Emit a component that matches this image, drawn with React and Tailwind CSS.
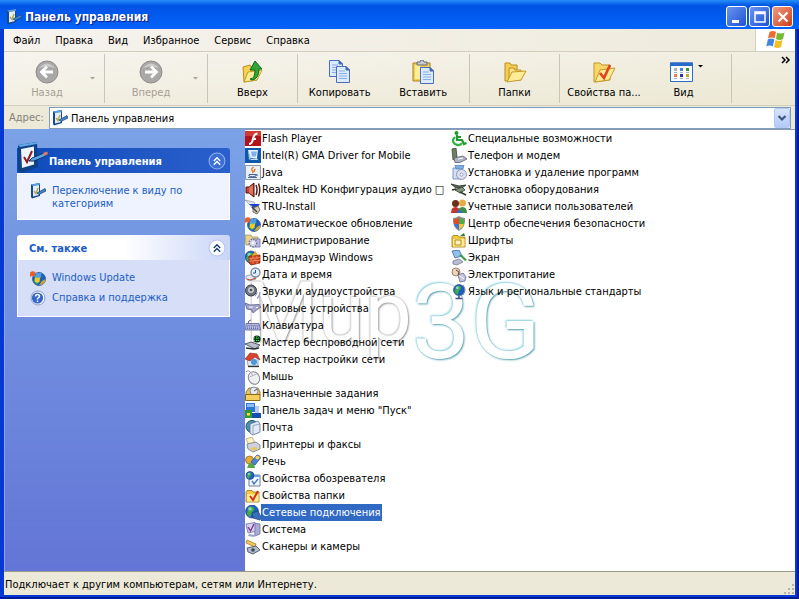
import React from "react";

const Svg = ({ children, className = "size-4", box = 16 }) => (
  <svg aria-hidden="true" viewBox={`0 0 ${box} ${box}`} className={`${className} shrink-0`}>
    {children}
  </svg>
);

const PanelArt = () => (
  <>
    <path d="M1 1.500L10 0v13l-8 2.500-1-1.500z" fill="#174a8c" />
    <path d="M1 1.500L10 0v1.500L3 3z" fill="#5fa0e0" />
    <path d="M3 3l6-1v10l-6 1.500z" fill="#e3eefc" />
    <path d="M4 8l2 2.500L8 5" stroke="#b9a548" strokeWidth="1.400" fill="none" />
    <path d="M7 10l8-4.500 1 2.500-7 3.500z" fill="#3f86c9" stroke="#1c3f70" strokeWidth=".7" />
  </>
);

const GlobeArt = ({ cx = 8, cy = 8, r = 7 }) => (
  <>
    <circle cx={cx} cy={cy} r={r} fill="#1f5fc4" stroke="#143a80" strokeWidth=".6" />
    <path
      d={`M${cx - r * 0.6} ${cy - r * 0.6}q${r * 0.7} ${-r * 0.4} ${r} ${r * 0.2}l${-r * 0.4} ${r * 0.6}-${r * 0.3} ${r * 0.7}-${r * 0.5}-${r * 0.5}z`}
      fill="#3fae49"
    />
    <circle cx={cx - r * 0.3} cy={cy - r * 0.4} r={r * 0.25} fill="#bfe3ff" opacity=".7" />
  </>
);

const FolderArt = () => (
  <>
    <path d="M1 4V14h13V4H8L7 2.500H2z" fill="#f3c93f" stroke="#9a7414" strokeWidth=".8" />
    <path d="M2 6h11.500v7.500H2z" fill="#fdeb93" />
  </>
);

const UpdateArt = () => (
  <>
    <GlobeArt cx={9} cy={9} r={6.5} />
    <path d="M0 2.500q3-2.500 5.500 0L4.500 7q-2-2-4.500 0z" fill="#e8602a" />
    <path d="M6 2.500q3 1.500 6-.5l-1.500 5Q8 8.500 5 7z" fill="#4f9fe8" />
    <path d="M5 7.500q3 1.500 5-.5l-.5 5q-2.500 1.500-4.500-.5z" fill="#f3cb27" />
    <path d="M9 15q6 0 6.500-6L12 11z" fill="#c9a928" />
  </>
);

const art = {
  panel: <PanelArt />,
  flash: (
    <>
      <path d="M0 0h16v15H0z" fill="#b3141b" />
      <path d="M0 0h16v5H0z" fill="#cf3a35" />
      <path d="M4 13q3 0 4-5 1-5 4.500-5.500M7 8h4" stroke="#fff" strokeWidth="2" fill="none" />
    </>
  ),
  intel: (
    <>
      <path d="M0 0h16v15H0z" fill="#0d58ab" />
      <path d="M3 2h10l-1 8H5z" fill="#e6f1ff" />
      <path d="M6 3.500h6l-1 5H7z" fill="#7fb0ea" />
      <path d="M3 2l3 8-2 2z" fill="#9cc5f2" />
      <path d="M5 11l7-1 1 2H6z" fill="#c2dbf8" />
    </>
  ),
  java: (
    <>
      <path d="M.5.5h15v14H.5z" fill="#e9eef3" stroke="#8b98a6" />
      <path d="M8.500 2q-3 2-1 4 1 1 0 2M10.500 4q-2 1-1 3" stroke="#e2711d" fill="none" strokeWidth="1.300" />
      <path d="M4 9.500h7v1.500q-3.500 1.500-7 0zM3 12.500h9M11 9.500q2 0 1 1.500" stroke="#47689a" fill="none" />
    </>
  ),
  realtek: (
    <>
      <path d="M1 5h3l5-4v14l-5-4H1z" fill="#c9422e" stroke="#3d120c" />
      <path d="M5 4.500v7M7 3.500v9" stroke="#ef9479" strokeWidth="1.200" />
      <path d="M11 3q2 5 0 10M13.500 1.500q2.500 6.500 0 13" stroke="#4c211b" fill="none" strokeWidth="1.500" />
    </>
  ),
  tru: (
    <>
      <path d="M0 1l9 2 2 5-4 1-3-4z" fill="#dfe4ec" stroke="#7b8595" strokeWidth=".6" />
      <path d="M4 5h11l-3 3.500-4-.5z" fill="#1a3fd1" />
      <path d="M8 9l5-2 2 4-3 4-4-2z" fill="#d9cdb0" stroke="#6a604c" strokeWidth=".9" />
      <path d="M7 8l5 5" stroke="#32415f" strokeWidth="1.500" />
    </>
  ),
  update: <UpdateArt />,
  admin: (
    <>
      <path d="M0 2h6l1 2h6v8H1z" fill="#e7d489" stroke="#988655" strokeWidth=".7" />
      <path d="M7 6h8v8H7z" fill="#b9bbe0" stroke="#6e70a5" strokeWidth=".8" />
      <circle cx="8" cy="10" r="3.800" fill="#d8d7ee" stroke="#7775a6" strokeDasharray="1.500 1" strokeWidth="1.500" />
      <circle cx="8" cy="10" r="1.300" fill="#fff" />
    </>
  ),
  firewall: (
    <>
      <GlobeArt cx={6} cy={7} r={6} />
      <path d="M4 6l11-1v8l-9 2-2-2z" fill="#cf401a" stroke="#6e1e09" strokeWidth=".7" />
      <path d="M4 8.600l11-1M4 11.200l11-1M8 6v2.600M12 6v2.600M6 8.600v2.600M10 8.600v2.600M8 11.200V14M12 11.200V14" stroke="#f6a57e" strokeWidth=".7" />
      <path d="M7 6q1-3 4-5 0 2 2 4z" fill="#f9a31d" />
    </>
  ),
  date: (
    <>
      <path d="M1 9l7-2 3 5-7 2-3-2z" fill="#e8eaf0" stroke="#8990a0" strokeWidth=".8" />
      <path d="M2 12l3 1 6-2" stroke="#c34934" fill="none" />
      <circle cx="10.500" cy="5.500" r="4.500" fill="#e1eefb" stroke="#7f8ca0" strokeWidth="1.400" />
      <path d="M10.500 3v3H8" stroke="#34507c" fill="none" />
    </>
  ),
  sound: (
    <>
      <circle cx="6" cy="6.500" r="5.500" fill="#6f747e" stroke="#3a3d45" />
      <circle cx="6" cy="6" r="3" fill="#c6cad2" />
      <circle cx="6" cy="6" r="1.300" fill="#4d515a" />
      <path d="M10 12q2-2 2-4M12 14.500q3-2.500 3-6.500" stroke="#8f97c0" fill="none" strokeWidth="1.200" />
    </>
  ),
  game: (
    <>
      <path d="M0 2l5 2 9-.5q2 1 1.500 3L12 8.500l-3 3-2-.5v-2L2 8z" fill="#a4a6cc" stroke="#585a87" strokeWidth=".8" />
      <path d="M4 6h4M11 6.500h2" stroke="#fff" />
    </>
  ),
  keyboard: (
    <>
      <path d="M3 6q0-4 3-4" stroke="#585a87" fill="none" />
      <path d="M1 5.500h13l1.500 6.500H.5z" fill="#b4b8de" stroke="#5c6091" strokeWidth=".8" />
      <path d="M2.500 7.500h11M2 9h12M2 10.500h12" stroke="#6a6ea5" strokeDasharray="1 1" />
    </>
  ),
  wireless: (
    <>
      <path d="M0 9l6-2 9 3-5 4z" fill="#b9bcc9" stroke="#3d4251" strokeWidth=".8" />
      <path d="M1 13l8 1 5-1" stroke="#2a2d38" fill="none" strokeWidth="1.300" />
      <circle cx="12" cy="4" r="3.500" fill="#0b3315" />
      <path d="M9 3h6M9 5.500h6M12 1v7" stroke="#46d556" strokeDasharray="1 1" />
    </>
  ),
  home: (
    <>
      <path d="M2 6l6-4 5 5v7H3z" fill="#dce9fa" stroke="#7c8caa" strokeWidth=".7" />
      <path d="M0 7l5-6 7 1 3 6-5-3-5 4z" fill="#d9442a" stroke="#8d2716" strokeWidth=".6" />
      <circle cx="9" cy="10" r="3" fill="#4a97dd" />
      <path d="M3 14.500h11" stroke="#333" strokeWidth="1.300" />
    </>
  ),
  mouse: (
    <>
      <path d="M1 3q2-3 5 1" stroke="#8a8f98" fill="none" />
      <ellipse cx="9" cy="9" rx="5.500" ry="6.500" transform="rotate(-25 9 9)" fill="#eeeff1" stroke="#83888f" />
      <path d="M4.500 8l7-3M7.500 6.500L6.500 4" stroke="#9ba0a7" strokeWidth=".8" />
    </>
  ),
  tasks: (
    <>
      <path d="M1 6l3-4h9l2 4v3H1z" fill="#e6c65a" stroke="#7e6420" strokeWidth=".8" />
      <circle cx="9" cy="5" r="4" fill="#e4e8f0" stroke="#8b8e96" />
      <path d="M9 5l3-2" stroke="#444" fill="none" strokeWidth=".9" />
      <path d="M.5 8.500h14.500v6H.5z" fill="#f3d05c" stroke="#8a6a18" />
    </>
  ),
  taskbar: (
    <>
      <path d="M1 0h9v9H1z" fill="#2f75d8" />
      <path d="M2 1h7v3H2z" fill="#8cbdf5" />
      <path d="M10 3h4v8h-4z" fill="#b6cdef" />
      <path d="M0 7h7v8H0z" fill="#2c9a36" />
      <path d="M7 10h9v5H7z" fill="#164fb2" />
      <path d="M2 10h3v2.500H2z" fill="#ffdc3b" />
    </>
  ),
  mail: (
    <>
      <circle cx="7" cy="6.500" r="6" fill="#4d94a6" stroke="#1c5263" />
      <path d="M5 4l8-3 2 3v8l-7 3-3-2z" fill="#dfeaf8" stroke="#536e91" strokeWidth=".8" />
      <path d="M8 5.500v9M8 5.500l7-1.500" stroke="#7d96b6" fill="none" strokeWidth=".8" />
    </>
  ),
  printer: (
    <>
      <path d="M1 2l6-2 3 6-6 2z" fill="#fff2bb" stroke="#a39b6f" strokeWidth=".7" />
      <path d="M2 7l9-2 4 3v4l-7 3-5-3z" fill="#cfd2de" stroke="#717685" strokeWidth=".8" />
      <path d="M5 11l6-1 2 2-5 2z" fill="#e8c75c" />
    </>
  ),
  speech: (
    <>
      <circle cx="4.500" cy="6" r="4" fill="#e3ad38" stroke="#926415" strokeWidth=".8" />
      <path d="M2 14l2-5 5 1 1 4z" fill="#58a64c" />
      <path d="M6 8l6-7q3 0 3.500 3L10 11z" fill="#4b83d3" stroke="#284f92" strokeWidth=".8" />
      <circle cx="12.500" cy="3.500" r="2" fill="#f4d155" />
    </>
  ),
  inet: (
    <>
      <path d="M4 4h11v11H4z" fill="#f5f9ff" stroke="#6a7fa8" />
      <path d="M4 4h11v2H4z" fill="#6fa3e4" />
      <GlobeArt cx={5} cy={4.5} r={4} />
      <path d="M7 10l2 3 4-5" stroke="#3f77c9" strokeWidth="1.400" fill="none" />
    </>
  ),
  folderOpt: (
    <>
      <FolderArt />
      <path d="M5 8l3 4 5-9" stroke="#d4301a" strokeWidth="2" fill="none" />
    </>
  ),
  network: (
    <>
      <GlobeArt cx={7} cy={6.500} r={6.5} />
      <path d="M7 8l6-2 3 6-1 3-7-2z" fill="#3a6fbe" stroke="#21447d" strokeWidth=".8" />
    </>
  ),
  system: (
    <>
      <path d="M9 1l6 1v10l-5 2z" fill="#a9add6" stroke="#6d70a0" strokeWidth=".8" />
      <path d="M1 2l9-1.500v9L3 11z" fill="#cfd2ea" stroke="#6d70a0" strokeWidth=".8" />
      <path d="M3 5l2.500 4L9 2" stroke="#7f2a96" strokeWidth="1.300" fill="none" />
      <path d="M4 12l7 1-2 2-6-1z" fill="#9aa3cf" />
    </>
  ),
  scanner: (
    <>
      <path d="M2 1l9 4-1 3-9-4z" fill="#f2c85a" stroke="#97731c" strokeWidth=".7" />
      <path d="M2 9l9-2 4 4-7 4-5-2z" fill="#b4bac8" stroke="#4e5669" strokeWidth=".9" />
      <circle cx="8" cy="11" r="1.800" fill="#34486d" />
    </>
  ),
  access: (
    <>
      <circle cx="5.500" cy="2" r="2" fill="#1f9a30" />
      <path d="M6 4v5h5l2 4 2.500-1M6 6h4" stroke="#1f9a30" strokeWidth="2.200" fill="none" />
      <path d="M4 6q-4 4 0 7 5 2.500 7-1" stroke="#2db340" strokeWidth="2.200" fill="none" />
    </>
  ),
  phone: (
    <>
      <path d="M1 1l4-1 1 9-4 3z" fill="#6f8069" stroke="#3a4637" strokeWidth=".8" />
      <path d="M3 10l9-2 4 3-7 3.500H4z" fill="#aeb3c4" stroke="#5a6074" strokeWidth=".8" />
      <path d="M7 11l5-1" stroke="#fff" />
    </>
  ),
  programs: (
    <>
      <path d="M2 3h8v11H2z" fill="#cfe0f5" stroke="#6483ae" strokeWidth=".8" />
      <path d="M4 0h9l-1 4H5z" fill="#7eaee4" stroke="#446ea5" strokeWidth=".6" />
      <circle cx="10.500" cy="9.500" r="5" fill="#dcdff0" stroke="#7f86a6" strokeWidth=".8" />
      <circle cx="10.500" cy="9.500" r="1.500" fill="#fff" stroke="#7f86a6" strokeWidth=".7" />
    </>
  ),
  hardware: (
    <>
      <path d="M0 2l8 2 7-1-4 3-6 0z" fill="#5d6d5b" stroke="#2d372b" strokeWidth=".9" />
      <path d="M4 8l7-3 3 3-5 3z" fill="#84957f" stroke="#35412f" strokeWidth=".8" />
      <path d="M1 8l4-1M9 10l6 3" stroke="#2b3429" strokeWidth="1.400" />
    </>
  ),
  users: (
    <>
      <circle cx="4.500" cy="4.500" r="3.500" fill="#6d2f17" />
      <circle cx="11.500" cy="4" r="3.500" fill="#e4ad48" />
      <path d="M0 14q0-6 4.500-6T9 14z" fill="#c4362c" />
      <path d="M7 14q0-6 4.500-6t4.500 6z" fill="#3c8e49" />
      <path d="M5 14l3-4 4 4z" fill="#3868c0" />
    </>
  ),
  security: (
    <>
      <path d="M8 0q3 2 6 2 1 9-6 13Q1 11 2 2q3 0 6-2z" fill="#8a8f99" />
      <path d="M8 1.500V8h-5V3q3 0 5-1.500z" fill="#e5482b" />
      <path d="M8 1.500V8h5V3q-3 0-5-1.500z" fill="#4cae46" />
      <path d="M3 8h5v6Q4 11.500 3 8z" fill="#3b73d8" />
      <path d="M13 8H8v6q4-2.500 5-6z" fill="#f6c62d" />
    </>
  ),
  fonts: (
    <>
      <FolderArt />
      <path d="M4 7h6v5H4z" fill="#fff4bd" stroke="#b58b1d" />
      <path d="M9 3l4-3 1 3z" fill="#2f7d38" />
    </>
  ),
  display: (
    <>
      <path d="M1 1l7-1 3 6-7 2z" fill="#8fc0f0" stroke="#4e7399" strokeWidth=".9" />
      <path d="M8 5l3 0 5 5-2 1z" fill="#3d9b48" />
      <path d="M2 11l6-2 4 3-6 3-4-1z" fill="#b7bed5" stroke="#69718c" strokeWidth=".7" />
    </>
  ),
  power: (
    <>
      <circle cx="5" cy="5" r="4" fill="#ead4b8" stroke="#8b705a" strokeWidth=".8" />
      <path d="M5 3l3 2-1 3" stroke="#7c3b2c" fill="none" />
      <path d="M7 8l5-2 3 4-1 4-5 1z" fill="#c2c4de" stroke="#676a93" strokeWidth=".8" />
      <path d="M9 9l4 3" stroke="#fff" />
    </>
  ),
  language: (
    <>
      <GlobeArt cx={8} cy={6} r={5.500} />
      <path d="M8 12v2M4.500 14.500h7" stroke="#46508e" strokeWidth="1.600" />
      <path d="M12 1q4 5 0 10" stroke="#7582bb" fill="none" />
    </>
  ),
  help: (
    <>
      <circle cx="8" cy="8" r="7" fill="#f4f7ff" stroke="#8f9dbd" />
      <circle cx="7.500" cy="8" r="5.600" fill="#3567c8" />
      <path d="M5.500 6.500q0-2 2-2t2 1.800q0 1.200-2 2.200v1M7.500 10.500v1.500" stroke="#fff" strokeWidth="1.500" fill="none" />
    </>
  ),
};

const firstColumn = [
  ["flash", "Flash Player"],
  ["intel", "Intel(R) GMA Driver for Mobile"],
  ["java", "Java"],
  ["realtek", "Realtek HD Конфигурация аудио □"],
  ["tru", "TRU-Install"],
  ["update", "Автоматическое обновление"],
  ["admin", "Администрирование"],
  ["firewall", "Брандмауэр Windows"],
  ["date", "Дата и время"],
  ["sound", "Звуки и аудиоустройства"],
  ["game", "Игровые устройства"],
  ["keyboard", "Клавиатура"],
  ["wireless", "Мастер беспроводной сети"],
  ["home", "Мастер настройки сети"],
  ["mouse", "Мышь"],
  ["tasks", "Назначенные задания"],
  ["taskbar", "Панель задач и меню \"Пуск\""],
  ["mail", "Почта"],
  ["printer", "Принтеры и факсы"],
  ["speech", "Речь"],
  ["inet", "Свойства обозревателя"],
  ["folderOpt", "Свойства папки"],
  ["network", "Сетевые подключения"],
  ["system", "Система"],
  ["scanner", "Сканеры и камеры"],
];

const secondColumn = [
  ["access", "Специальные возможности"],
  ["phone", "Телефон и модем"],
  ["programs", "Установка и удаление программ"],
  ["hardware", "Установка оборудования"],
  ["users", "Учетные записи пользователей"],
  ["security", "Центр обеспечения безопасности"],
  ["fonts", "Шрифты"],
  ["display", "Экран"],
  ["power", "Электропитание"],
  ["language", "Язык и региональные стандарты"],
];

const ItemList = ({ items, selected }) => (
  <ul className="w-[206px] shrink-0">
    {items.map(([icon, label]) => (
      <li key={label} className="h-[17px]">
        <button type="button" className="flex h-[17px] items-center whitespace-nowrap">
          <Svg>{art[icon]}</Svg>
          <span className={label === selected ? "h-[17px] bg-[#316ac5] px-px leading-[18px] text-white" : "h-[17px] px-px leading-[18px]"}>
            {label}
          </span>
        </button>
      </li>
    ))}
  </ul>
);

const CircleArrow = ({ flip }) => (
  <Svg className="size-6" box={24}>
    <circle cx="12" cy="12" r="11" fill="#a9a8a6" stroke="#8f8e8c" />
    <path d="M4 8q8-9 16 0-8-3-16 0z" fill="#cbcac8" />
    <path d={flip ? "M6 12h11M12 6.500l5.500 5.500-5.500 5.500" : "M18 12H7M12 6.500L6.500 12l5.500 5.500"} stroke="#fff" strokeWidth="2.800" fill="none" />
  </Svg>
);

const Page = ({ x, y }) => (
  <g transform={`translate(${x} ${y})`}>
    <path d="M.5.500h9.500l3.500 3.500v12.500H.5z" fill="#dceafd" stroke="#4a6ebb" />
    <path d="M10 .5V4h3.500z" fill="#4068b5" stroke="#4068b5" />
    <path d="M3 5h6M3 7.500h8M3 10h8M3 12.500h8" stroke="#86aee9" />
  </g>
);

const toolArt = {
  up: (
    <>
      <path d="M2 7l7-2 1 2h7l-1 13-13 2z" fill="#f6cf53" stroke="#b98e22" />
      <path d="M3 22l4-10 14-2-5 10z" fill="#fdeb96" stroke="#c59b2b" />
      <path d="M9 19q5 0 5-9h-5l5-9 7 8h-3q0 10-7 11z" fill="#2fa53a" stroke="#116a1d" />
    </>
  ),
  copy: (
    <>
      <Page x={1} y={0} />
      <Page x={8} y={6} />
    </>
  ),
  paste: (
    <>
      <path d="M2 3h17v18H2z" fill="#f3cf50" stroke="#a98124" />
      <path d="M4 5h5v14H4z" fill="#fdee9f" />
      <path d="M6 5V2h3l1-2h2l1 2h3v3z" fill="#c9cbd2" stroke="#666b77" />
      <Page x={9} y={7} />
    </>
  ),
  folders: (
    <>
      <path d="M2 3h5l1 2h6v15l-12 1z" fill="#f6cf53" stroke="#b98e22" />
      <path d="M6 8h5l1 2h6v10H6z" fill="#fbe084" stroke="#b98e22" />
      <path d="M4 22l5-10 14-1-5 9z" fill="#fdeb96" stroke="#c59b2b" />
    </>
  ),
  options: (
    <>
      <path d="M2 3h6l2 2h8v15l-16 2z" fill="#f8d66a" stroke="#bf9528" />
      <path d="M3 22l5-12 15-2-6 12z" fill="#fdeb96" stroke="#c59b2b" />
      <path d="M8 13l4 5 6-13" stroke="#e2421e" strokeWidth="2.600" fill="none" />
    </>
  ),
  view: (
    <>
      <path d="M.5 3h22v18.500H.5z" fill="#fff" stroke="#2a6bc9" />
      <path d="M0 2.500h23V6H0z" fill="#2a6bc9" />
      <path d="M4 8h3v3H4z" fill="#b0b0b0" />
      <path d="M10 8h3v3h-3z" fill="#3f83e8" />
      <path d="M16 8h3v3h-3z" fill="#35913a" />
      <path d="M4 14h3v3H4z" fill="#ee7a57" />
      <path d="M10 14h3v3h-3z" fill="#24389e" />
      <path d="M16 14h3v3h-3z" fill="#c9a228" />
      <path d="M4 12.500h3M10 12.500h3M16 12.500h3M4 18.500h3M10 18.500h3M16 18.500h3" stroke="#9db4d8" />
    </>
  ),
};

const Caret = ({ className }) => (
  <Svg className={className} box={5}>
    <path d="M0 1h5L2.500 3.500z" fill="currentColor" />
  </Svg>
);

const ToolButton = ({ icon, label, children, className = "" }) => (
  <button type="button" className={`flex min-w-0 flex-1 flex-col items-center gap-px whitespace-nowrap pt-1.5 ${className}`}>
    {children || (
      <Svg className="size-6" box={24}>
        {toolArt[icon]}
      </Svg>
    )}
    <span className="leading-4">{label}</span>
  </button>
);

const Chevrons = () => (
  <path d="M5.500 8.500L8.500 5.500l3 3M5.500 12L8.500 9l3 3" stroke="currentColor" strokeWidth="1.400" fill="none" />
);

const SideLink = ({ icon, children }) => (
  <a href="#" className="flex gap-1.5 text-[#215dc6]">
    <Svg>{art[icon]}</Svg>
    <span className="pt-px leading-[13px]">{children}</span>
  </a>
);

const captionButton = "flex size-[21px] items-center justify-center rounded-[3px] border border-white text-white";

export default function App() {
  return (
    <div className="flex min-h-screen flex-col border-r-2 border-b-2 border-[#001a9c] font-['DejaVu_Sans_Condensed','DejaVu_Sans',sans-serif] text-[11px] text-black">
      <div className="flex flex-1 flex-col border-r-2 border-b-2 border-l-4 border-[#0639d3] bg-[#ece9d8]">
        <header className="-mr-1 -ml-1 flex h-[29px] items-center bg-linear-to-b from-[#2a8cf8] via-[#0053e4] via-20% to-[#0463fb] pt-1 pr-1.5 pl-1.5">
          <Svg>{art.panel}</Svg>
          <h1 className="ml-[3px] flex-1 text-[12px] font-bold text-white [text-shadow:1px_1px_1px_#0a1883]">Панель управления</h1>
          <div className="flex gap-0.5">
            <button type="button" aria-label="Свернуть" className={`${captionButton} bg-linear-to-br from-[#6b93f0] to-[#1f4fd4]`}>
              <Svg box={16}>
                <path d="M3 11h7v3H3z" fill="#fff" />
              </Svg>
            </button>
            <button type="button" aria-label="Развернуть" className={`${captionButton} bg-linear-to-br from-[#6b93f0] to-[#1f4fd4]`}>
              <Svg box={16}>
                <path d="M3 3h10v10H3zM3 4.500h10" stroke="#fff" strokeWidth="1.500" fill="none" />
              </Svg>
            </button>
            <button type="button" aria-label="Закрыть" className={`${captionButton} bg-linear-to-br from-[#f09a80] to-[#cc3a12]`}>
              <Svg box={16}>
                <path d="M3.500 3.500l9 9M12.500 3.500l-9 9" stroke="#fff" strokeWidth="2.200" />
              </Svg>
            </button>
          </div>
        </header>

        <nav className="flex h-[23px] items-stretch border-b border-[#d3cfbf] bg-linear-to-r from-[#f6f2ee] to-[#eeebdc]">
          <div className="flex flex-1 items-center gap-[15px] pt-0.5 pl-[9px]">
            {["Файл", "Правка", "Вид", "Избранное", "Сервис", "Справка"].map((label) => (
              <button key={label} type="button">
                {label}
              </button>
            ))}
          </div>
          <div className="flex w-10 items-center justify-center border-l border-[#d3cfbf] bg-white">
            <Svg className="size-5" box={20}>
              <path d="M3.500 2q3.500-2 6.500 0L8.500 8.500q-3-2-6.500 0z" fill="#ee6b33" />
              <path d="M11 2.500q4 2 7.500 0L17 9q-3.500 2-7 0z" fill="#76b82e" />
              <path d="M1.800 9.500q3.500-2 6.500 0l-1.500 7q-3-2-6.500 0z" fill="#3e86de" />
              <path d="M9.500 10q3.500 2 7 0l-1.500 7q-3.500 2-7 0z" fill="#f6bf27" />
            </Svg>
          </div>
        </nav>

        <div className="flex h-[54px] border-b border-[#d3cfbf] bg-linear-to-br from-[#f7f4ef] to-[#ece8d3] py-0.5">
          <div className="flex w-[101px] border-r border-[#c9c6b5] text-[#a5a294]">
            <ToolButton label="Назад" className="pl-1">
              <CircleArrow />
            </ToolButton>
            <button type="button" aria-label="Назад: список" className="w-[18px] pr-1.5">
              <Caret className="ml-1 size-[5px]" />
            </button>
          </div>
          <div className="flex w-[103px] border-r border-[#c9c6b5] text-[#a5a294]">
            <ToolButton label="Вперед" className="pl-2">
              <CircleArrow flip />
            </ToolButton>
            <button type="button" aria-label="Вперед: список" className="w-[18px] pr-1.5">
              <Caret className="ml-1 size-[5px]" />
            </button>
          </div>
          <div className="flex w-[90px] border-r border-[#c9c6b5]">
            <ToolButton icon="up" label="Вверх" />
          </div>
          <div className="flex w-[172px] border-r border-[#c9c6b5]">
            <ToolButton icon="copy" label="Копировать" />
            <ToolButton icon="paste" label="Вставить" className="pr-1" />
          </div>
          <div className="flex w-[90px] border-r border-[#c9c6b5]">
            <ToolButton icon="folders" label="Папки" />
          </div>
          <div className="flex w-[172px] border-r border-[#c9c6b5]">
            <div className="flex w-[88px]">
              <ToolButton icon="options" label="Свойства па..." />
            </div>
            <ToolButton label="Вид" className="pr-3">
              <span className="flex pl-1.5">
                <Svg className="size-6" box={24}>
                  {toolArt.view}
                </Svg>
                <Caret className="mt-1 ml-1 size-[5px]" />
              </span>
            </ToolButton>
          </div>
          <button type="button" aria-label="Другие кнопки" className="ml-auto flex pt-px pr-1">
            <Svg className="size-2.5" box={10}>
              <path d="M1 2l3 3-3 3M5 2l3 3-3 3" stroke="#000" strokeWidth="1.500" fill="none" />
            </Svg>
          </button>
        </div>

        <div className="flex h-[23px] items-stretch pt-px pr-1 pl-[5px]">
          <label htmlFor="address" className="w-10 self-center text-[#85827a]">
            Адрес:
          </label>
          <div className="flex flex-1 items-center border border-[#7f9db9] bg-white pl-0.5">
            <Svg>{art.panel}</Svg>
            <input id="address" defaultValue="Панель управления" className="min-w-0 flex-1 bg-transparent pt-0.5 pl-[3px] outline-none" />
            <button type="button" aria-label="Открыть список адресов" className="flex h-5 w-4 items-center justify-center rounded-xs border border-[#b3c9f5] bg-linear-to-b from-[#d9e4fd] to-[#b2c9f7]">
              <Svg className="size-2.5" box={10}>
                <path d="M1.500 3L5 6.500 8.500 3" stroke="#3f5684" strokeWidth="2.200" fill="none" />
              </Svg>
            </button>
          </div>
        </div>

        <div className="flex flex-1">
          <aside className="flex w-[241px] shrink-0 flex-col gap-[15px] border-l border-[#8aa6ec] bg-linear-to-b from-[#7ba2e7] to-[#6375d6] pt-[19px] pr-[15px] pl-3">
            <section>
              <h2 className="relative flex h-[25px] items-center rounded-tr-[3px] bg-linear-to-r from-[#0d4cbb] to-[#2a5fcc] pr-1 pl-8 font-bold text-white">
                <span className="absolute bottom-0 left-0">
                  <Svg className="size-8" box={32}>
                    <path d="M1 4l19-3 1 25-17 6-3-3z" fill="#0f4286" />
                    <path d="M1 4l19-3v2L3 6z" fill="#63a8ec" />
                    <path d="M4 8l13-2.500v18L5 27z" fill="#eef5ff" />
                    <path d="M7 16l3 5 5-11" stroke="#8c1d27" strokeWidth="2" fill="none" />
                    <path d="M12 20l3-3 12-5 2 3-12 5z" fill="#5aa4e6" stroke="#12366b" />
                    <path d="M26 12l4-1.500 1 2.500-3.500 2z" fill="#e37a60" />
                  </Svg>
                </span>
                <span className="flex-1 pt-1">Панель управления</span>
                <button type="button" aria-label="Свернуть раздел">
                  <Svg className="size-[18px]" box={17}>
                    <circle cx="8.500" cy="8.500" r="7.500" fill="#3c6fd6" stroke="#8fb0f0" />
                    <Chevrons />
                  </Svg>
                </button>
              </h2>
              <div className="h-[47px] border border-t-0 border-white bg-[#eff3ff] pt-2.5 pr-8 pl-3">
                <SideLink icon="panel">Переключение к виду по категориям</SideLink>
              </div>
            </section>
            <section>
              <h2 className="flex h-[25px] items-center rounded-t-[3px] bg-linear-to-r from-white from-50% to-[#c9d5f8] pr-1 pl-3 font-bold text-[#215dc6]">
                <span className="flex-1 pt-1">См. также</span>
                <button type="button" aria-label="Свернуть раздел" className="text-[#1c3f7c]">
                  <Svg className="size-[18px]" box={17}>
                    <circle cx="8.500" cy="8.500" r="7.500" fill="#fff" stroke="#b9c4e6" />
                    <Chevrons />
                  </Svg>
                </button>
              </h2>
              <div className="flex h-[57px] flex-col gap-1 border border-t-0 border-white bg-[#d6dff7] pt-2.5 pl-3">
                <SideLink icon="update">Windows Update</SideLink>
                <SideLink icon="help">Справка и поддержка</SideLink>
              </div>
            </section>
          </aside>

          <main className="relative isolate flex flex-1 border-t border-[#8a9bb8] bg-white">
            <div aria-hidden="true" className="absolute top-[128px] left-0 -z-10 flex items-start font-[Roboto,'Open_Sans',sans-serif] text-white select-none">
              <span className="text-[84px] leading-[110px] [text-shadow:1px_1px_2px_#999,-1px_-1px_2px_#ccc]">Mup</span>
              <span className="text-[104px] leading-[130px] [text-shadow:1px_1px_2px_#4f9eab,-1px_-1px_2px_#8fd3dd]">3G</span>
            </div>
            <ItemList items={firstColumn} selected="Сетевые подключения" />
            <ItemList items={secondColumn} />
          </main>
        </div>

        <footer className="flex h-6 items-center justify-between border-t border-[#9a9888]">
          <span className="pt-1 pl-px">Подключает к другим компьютерам, сетям или Интернету.</span>
          <Svg className="size-3 self-end" box={12}>
            <path d="M9 1h2v2H9zM5 5h2v2H5zM9 5h2v2H9zM1 9h2v2H1zM5 9h2v2H5zM9 9h2v2H9z" fill="#b8b4a2" />
          </Svg>
        </footer>
      </div>
    </div>
  );
}
